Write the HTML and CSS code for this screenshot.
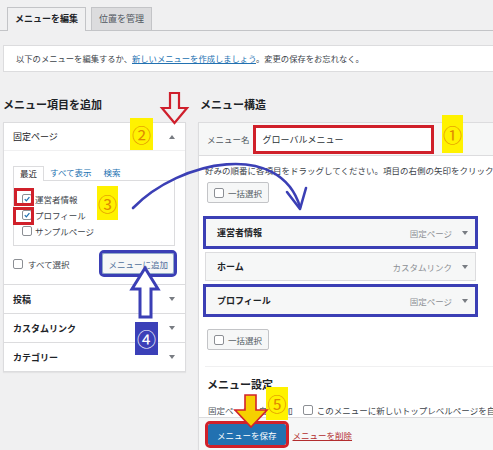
FILE: index.html
```
<!DOCTYPE html>
<html lang="ja">
<head>
<meta charset="utf-8">
<title>メニュー</title>
<link rel="stylesheet" href="styles.css">
</head>
<body>
<div class="page">
  <div class="tabs">
    <div class="tab active">メニューを編集</div>
    <div class="tab">位置を管理</div>
  </div>
  <div class="notice">以下のメニューを編集するか、<a class="link">新しいメニューを作成しましょう</a>。変更の保存をお忘れなく。</div>

  <div class="cols">
    <div class="left">
      <h2 class="h2">メニュー項目を追加</h2>
      <div class="acc">
        <div class="acc-head open"><span>固定ページ</span><span class="tri up"></span></div>
        <div class="acc-body">
          <div class="subtabs">
            <span class="st active">最近</span>
            <span class="st">すべて表示</span>
            <span class="st">検索</span>
          </div>
          <div class="list">
            <div class="chk"><span class="box"><svg viewBox="0 0 10 10"><path d="M2.2 5.2l2 2.1 3.8-4.6" /></svg></span>運営者情報</div>
            <div class="chk"><span class="box"><svg viewBox="0 0 10 10"><path d="M2.2 5.2l2 2.1 3.8-4.6" /></svg></span>プロフィール</div>
            <div class="chk"><span class="box"></span>サンプルページ</div>
          </div>
          <div class="addrow">
            <div class="chk"><span class="box"></span>すべて選択</div>
            <span class="btn add hl-blue">メニューに追加</span>
          </div>
        </div>
        <div class="acc-head"><span>投稿</span><span class="tri"></span></div>
        <div class="acc-head"><span>カスタムリンク</span><span class="tri"></span></div>
        <div class="acc-head"><span>カテゴリー</span><span class="tri"></span></div>
      </div>
    </div>

    <div class="right">
      <h2 class="h2 rh">メニュー構造</h2>
      <div class="panel">
        <div class="phead">
          <span class="lbl">メニュー名</span>
          <span class="name-input">グローバルメニュー</span>
        </div>
        <div class="pbody">
          <p class="hint">好みの順番に各項目をドラッグしてください。項目の右側の矢印をクリックすると、追加の設定オプションが表示されます。</p>
          <span class="btn bulk"><span class="box"></span>一括選択</span>
          <div class="items">
            <div class="item hl-blue"><span class="it-title">運営者情報</span><span class="it-type">固定ページ</span><span class="tri"></span></div>
            <div class="item"><span class="it-title">ホーム</span><span class="it-type">カスタムリンク</span><span class="tri"></span></div>
            <div class="item hl-blue"><span class="it-title">プロフィール</span><span class="it-type">固定ページ</span><span class="tri"></span></div>
          </div>
          <span class="btn bulk bulk2"><span class="box"></span>一括選択</span>
          <div class="settings">
            <h3 class="h3">メニュー設定</h3>
            <div class="setrow"><span class="setlbl">固定ページを自動追加</span><span class="box"></span><span>このメニューに新しいトップレベルページを自動的に追加</span></div>
          </div>
        </div>
        <div class="pfoot">
          <span class="btn primary hl-red">メニューを保存</span>
          <a class="del">メニューを削除</a>
        </div>
      </div>
    </div>
  </div>

  <!-- annotations -->
  <div class="redbox rb1"></div>
  <div class="redbox rb2"></div>
  <div class="anno yel a1">①</div>
  <div class="anno yel a2">②</div>
  <div class="anno yel a3">③</div>
  <div class="anno blu a4">④</div>
  <div class="anno yel a5">⑤</div>
  <svg class="arrows" width="493" height="450" viewBox="0 0 493 450">
    <polygon points="170,93 179,93 179,108 187,108 174.5,123 162,108 170,108" fill="none" stroke="#cf1f2c" stroke-width="2.2"/>
    <polygon points="145,268 158,289 151,289 151,317 140,317 140,289 132,289" fill="#fff" stroke="#3b3fb5" stroke-width="3" stroke-linejoin="miter"/>
    <path d="M133 208 C 180 160, 280 140, 300 207" fill="none" stroke="#3b3fb5" stroke-width="2.6" stroke-linecap="round"/>
    <polyline points="287,192 300,209 306,188" fill="none" stroke="#3b3fb5" stroke-width="2.6" stroke-linecap="round" stroke-linejoin="round"/>
    <polygon points="245,395 256,395 256,410 267,410 251,427 235,410 245,410" fill="#f6d000" stroke="#d2232a" stroke-width="1.6"/>
  </svg>
</div>
</body>
</html>
```
FILE: styles.css
```
html, body {
  margin: 0;
  padding: 0;
  background: #f0f0f1;
  overflow: hidden;
}
body {
  font-family: "Noto Sans CJK JP", "Noto Sans", sans-serif;
  color: #3c434a;
  font-size: 8.5px;
}
.page {
  position: relative;
  width: 493px;
  height: 450px;
  overflow: hidden;
}

/* top tabs */
.tabs {
  display: flex;
  gap: 5px;
  padding: 7px 0 0 7px;
  height: 23px;
  border-bottom: 1px solid #c3c4c7;
}
.tab {
  height: 22px;
  line-height: 22px;
  padding: 0 7px;
  border: 1px solid #c3c4c7;
  border-bottom: none;
  font-size: 9px;
  background: #dcdcde;
  color: #50575e;
}
.tab.active {
  background: #f0f0f1;
  color: #1d2327;
  font-weight: 700;
  height: 23px;
  margin-bottom: -1px;
}

/* notice */
.notice {
  margin: 14px 0 0 3px;
  height: 25px;
  line-height: 25px;
  background: #fff;
  border: 1px solid #dcdcde;
  border-right: none;
  padding-left: 12px;
  font-size: 8.3px;
  white-space: nowrap;
  overflow: hidden;
}
.link {
  color: #2271b1;
  text-decoration: underline;
}

/* columns */
.cols {
  display: flex;
  gap: 12px;
  margin-top: 24px;
  padding-left: 3px;
}
.left {
  width: 183px;
  flex: none;
}
.right {
  flex: 1;
  min-width: 0;
}
.h2 {
  margin: 0 0 10px;
  font-size: 11px;
  line-height: 16px;
  font-weight: 700;
  color: #1d2327;
}
.rh {
  padding-left: 2px;
}

/* left accordion */
.acc {
  background: #fff;
  border: 1px solid #dcdcde;
  box-shadow: 0 1px 1px rgba(0,0,0,0.05);
}
.acc-head {
  height: 28px;
  display: flex;
  align-items: center;
  justify-content: space-between;
  padding: 0 10px 0 9px;
  font-size: 9px;
  font-weight: 700;
  color: #1d2327;
  border-top: 1px solid #dcdcde;
}
.acc-head.open {
  border-top: none;
  height: 27px;
  font-weight: 400;
  border-bottom: 1px solid #f0f0f1;
}
.tri {
  width: 0;
  height: 0;
  border-left: 3px solid transparent;
  border-right: 3px solid transparent;
  border-top: 4px solid #787c82;
  flex: none;
}
.tri.up {
  border-top: none;
  border-bottom: 4px solid #787c82;
}
.acc-body {
  padding: 15px 10px 8px 9px;
}
.subtabs {
  display: flex;
  height: 14px;
  position: relative;
  z-index: 1;
}
.st {
  padding: 0 6px;
  line-height: 13px;
  font-size: 8.5px;
  color: #2271b1;
}
.st.active {
  color: #1d2327;
  background: #fff;
  border: 1px solid #dcdcde;
  border-bottom: none;
  height: 14px;
}
.list {
  height: 54px;
  border: 1px solid #dcdcde;
  padding: 10px 0 0 8px;
}
.chk {
  display: flex;
  align-items: center;
  height: 16px;
  font-size: 8.5px;
  color: #3c434a;
}
.box {
  display: inline-block;
  width: 10px;
  height: 10px;
  box-sizing: border-box;
  border: 1px solid #8c8f94;
  border-radius: 2px;
  background: #fff;
  margin-right: 3px;
  flex: none;
}
.box svg {
  display: block;
  width: 8px;
  height: 8px;
}
.box svg path {
  fill: none;
  stroke: #2271b1;
  stroke-width: 1.6;
}
.addrow {
  margin-top: 5px;
  height: 25px;
  display: flex;
  align-items: center;
  justify-content: space-between;
  padding-right: 1px;
}
.addrow .chk .box {
  margin-right: 5px;
}

/* buttons */
.btn {
  display: inline-flex;
  align-items: center;
  height: 21px;
  box-sizing: border-box;
  border: 1px solid #c3c4c7;
  border-radius: 2px;
  background: #f6f7f7;
  font-size: 8.5px;
  padding: 0 6px;
  white-space: nowrap;
}
.add {
  color: #50709a;
  border-color: #8fa9c9;
  padding: 0 5px;
}
.hl-blue {
  outline: 3px solid #3b3fb5;
  outline-offset: 0;
}
.item.hl-blue {
  outline-offset: -1px;
}
.hl-red {
  outline: 3px solid #d0202a;
}

/* right panel */
.panel {
  background: #fff;
  border: 1px solid #dcdcde;
  border-right: none;
  box-shadow: 0 1px 1px rgba(0,0,0,0.05);
  overflow: hidden;
}
.phead {
  height: 32px;
  display: flex;
  align-items: center;
  padding-left: 8px;
  background: #f6f7f7;
  border-bottom: 1px solid #dcdcde;
}
.lbl {
  color: #50575e;
  font-size: 8.5px;
}
.name-input {
  margin-left: 3px;
  width: 181px;
  height: 29px;
  box-sizing: border-box;
  border: 3px solid #d0202a;
  background: #fff;
  padding-left: 7px;
  line-height: 23px;
  font-size: 9px;
  color: #2c3338;
}
.pbody {
  padding: 0 0 0 6px;
}
.hint {
  margin: 7px 0 0;
  line-height: 14px;
  font-size: 8.5px;
  white-space: nowrap;
  overflow: hidden;
}
.bulk {
  margin: 5px 0 0 2px;
  color: #50575e;
}
.bulk .box {
  margin-right: 4px;
}
.bulk2 {
  margin-top: 14px;
}
.items {
  margin-top: 15px;
  display: flex;
  flex-direction: column;
  gap: 5px;
}
.item {
  width: 271px;
  height: 29px;
  box-sizing: border-box;
  display: flex;
  align-items: center;
  background: #f6f7f7;
  border: 1px solid #dcdcde;
  padding: 0 7px 0 11px;
}
.it-title {
  flex: 1;
  font-size: 9px;
  font-weight: 700;
  color: #1d2327;
}
.it-type {
  font-size: 8.5px;
  color: #8c8f94;
  margin-right: 10px;
}
.settings {
  margin-top: 16px;
  border-top: 1px solid #f0f0f1;
}
.h3 {
  margin: 9px 0 0 2px;
  font-size: 11px;
  line-height: 16px;
  font-weight: 700;
  color: #1d2327;
}
.setrow {
  margin-top: 11px;
  height: 14px;
  display: flex;
  align-items: center;
  padding-left: 3px;
  white-space: nowrap;
  overflow: hidden;
  color: #3c434a;
}
.setlbl {
  color: #50575e;
  margin-right: 10px;
}
.setrow .box {
  margin-right: 4px;
}
.pfoot {
  border-top: 1px solid #dcdcde;
  background: #f6f7f7;
  padding: 6px 0 10px 9px;
  display: flex;
  align-items: center;
}
.primary {
  background: #2271b1;
  border-color: #2271b1;
  color: #fff;
  padding: 0 8px;
}
.del {
  margin-left: 7px;
  color: #b32d2e;
  text-decoration: underline;
  font-size: 8.5px;
}

/* annotations */
.redbox {
  position: absolute;
  border: 3px solid #d0202a;
  box-sizing: border-box;
}
.rb1 { left: 14px; top: 188px; width: 20px; height: 18px; }
.rb2 { left: 13px; top: 207px; width: 21px; height: 18px; }
.anno {
  position: absolute;
  display: flex;
  align-items: center;
  justify-content: center;
  font-size: 19px;
  line-height: 1;
}
.yel {
  background: #fff200;
  color: #e08a00;
}
.blu {
  background: #3b40b8;
  color: #fff;
}
.a1 { left: 442px; top: 115px; width: 21px; height: 38px; }
.a2 { left: 130px; top: 118px; width: 23px; height: 32px; }
.a3 { left: 97px; top: 186px; width: 21px; height: 34px; }
.a4 { left: 135px; top: 322px; width: 23px; height: 33px; }
.a5 { left: 266px; top: 387px; width: 22px; height: 33px; }
.arrows {
  position: absolute;
  left: 0;
  top: 0;
  pointer-events: none;
}
```
